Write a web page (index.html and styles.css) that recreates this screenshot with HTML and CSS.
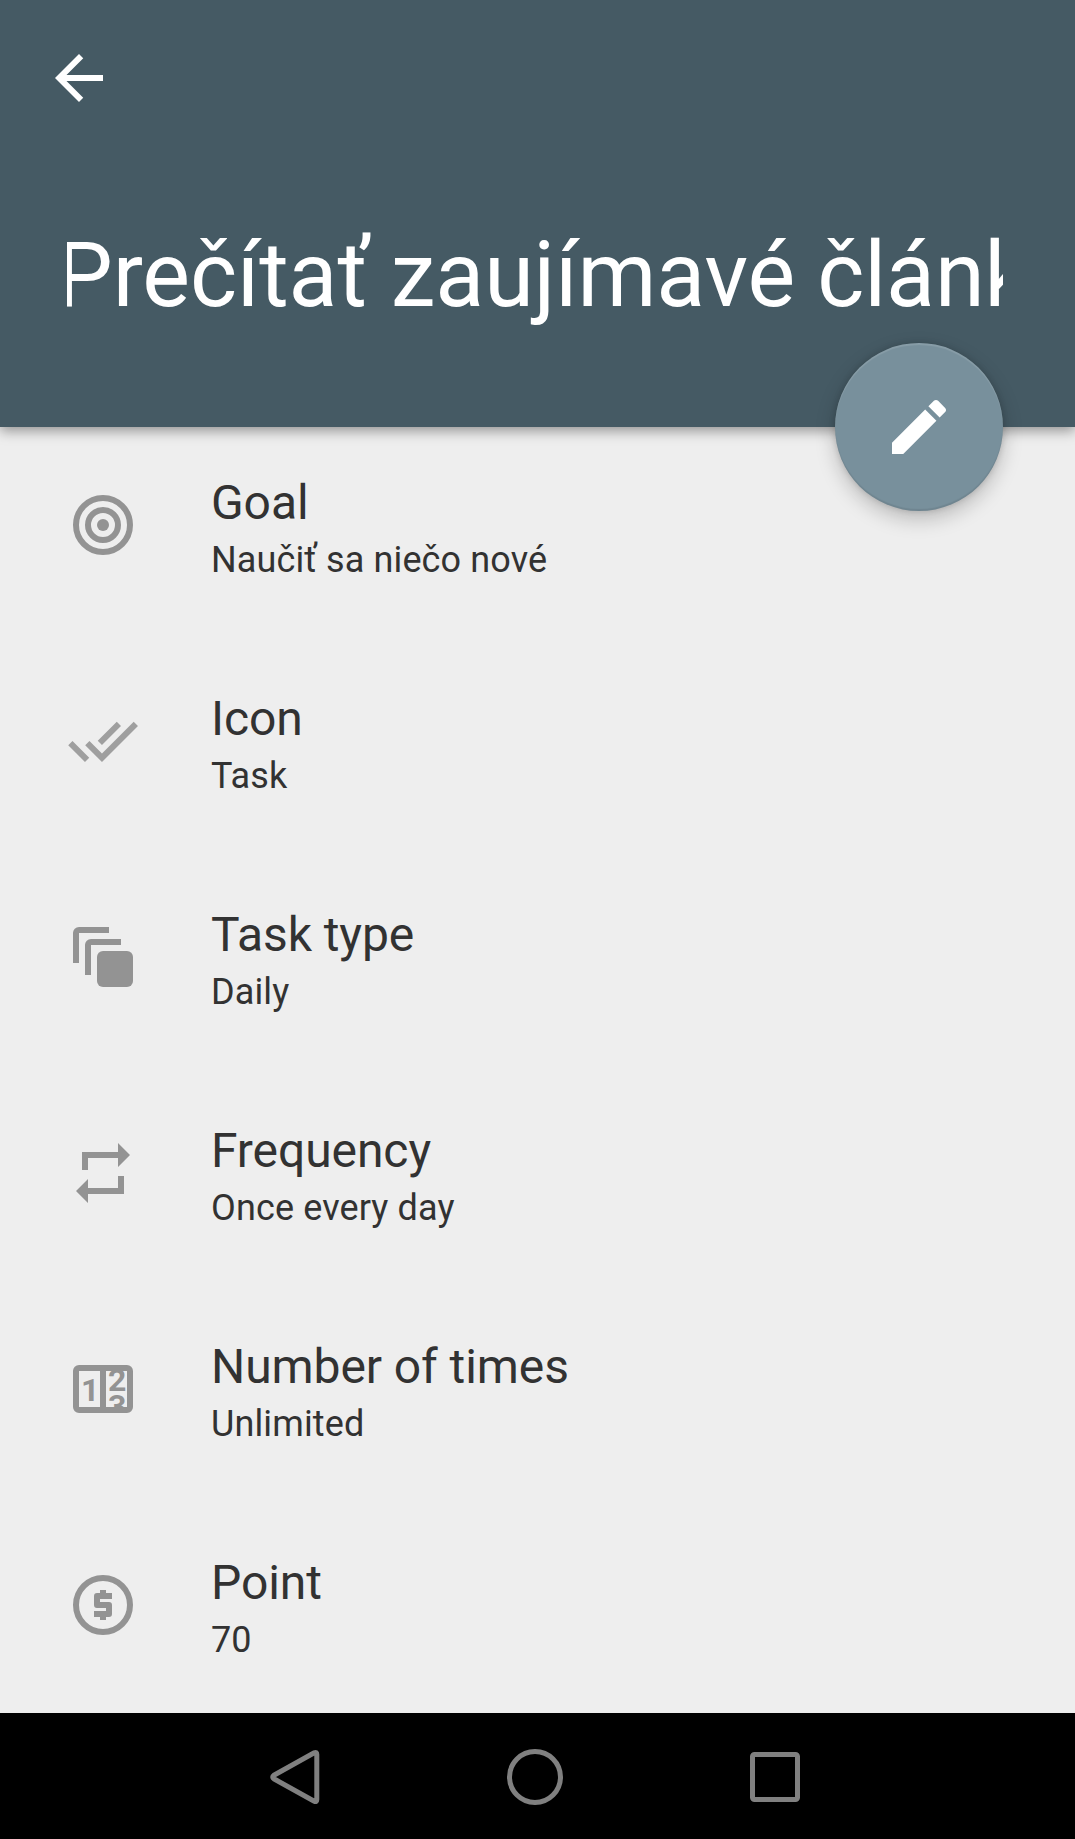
FILE: index.html
```
<!DOCTYPE html>
<html lang="sk">
<head>
    <meta charset="UTF-8">
    <meta name="viewport" content="width=device-width, initial-scale=1.0">
    <title>Task detail</title>
    <link rel="stylesheet" href="styles.css">
</head>
<body>
    <div class="screen">
        <header class="header">
            <a class="back" href="#" aria-label="Back">
                <svg class="icon" viewBox="0 0 24 24"><path d="M20 11H7.83l5.59-5.59L12 4l-8 8 8 8 1.41-1.41L7.83 13H20v-2z"/></svg>
            </a>
            <h1 class="title"><span>Prečítať zaujímavé článk</span></h1>
            <button class="fab" aria-label="Edit">
                <svg class="icon" viewBox="0 0 24 24"><path d="M3 17.25V21h3.75L17.81 9.94l-3.75-3.75L3 17.25zM20.71 7.04c.39-.39.39-1.02 0-1.41l-2.34-2.34c-.39-.39-1.02-.39-1.41 0l-1.83 1.83 3.75 3.75 1.83-1.83z"/></svg>
            </button>
        </header>

        <ul class="list">
            <li class="row">
                <svg class="icon" viewBox="0 0 24 24">
                    <g fill="none" stroke="currentColor" stroke-width="2"><circle cx="12" cy="12" r="9"/><circle cx="12" cy="12" r="5"/></g>
                    <circle cx="12" cy="12" r="2"/>
                </svg>
                <div class="text">
                    <div class="label">Goal</div>
                    <div class="value">Naučiť sa niečo nové</div>
                </div>
            </li>
            <li class="row">
                <svg class="icon light" viewBox="0 0 24 24"><path d="M18 7l-1.41-1.41-6.34 6.34 1.41 1.41L18 7zm4.24-1.41L11.66 16.17 7.48 12l-1.41 1.41L11.66 19l12-12-1.42-1.41zM.41 13.41L6 19l1.41-1.41L1.83 12 .41 13.41z"/></svg>
                <div class="text">
                    <div class="label">Icon</div>
                    <div class="value">Task</div>
                </div>
            </li>
            <li class="row">
                <svg class="icon" viewBox="0 0 24 24">
                    <path d="M2 14V4a2 2 0 0 1 2-2h10v2H4v10zM6 18V8a2 2 0 0 1 2-2h10v2H8v10z"/>
                    <rect x="10" y="10" width="12" height="12" rx="2"/>
                </svg>
                <div class="text">
                    <div class="label">Task type</div>
                    <div class="value">Daily</div>
                </div>
            </li>
            <li class="row">
                <svg class="icon" viewBox="0 0 24 24"><path d="M17 17H7v-3l-4 4 4 4v-3h12v-6h-2zM7 7h10v3l4-4-4-4v3H5v6h2z"/></svg>
                <div class="text">
                    <div class="label">Frequency</div>
                    <div class="value">Once every day</div>
                </div>
            </li>
            <li class="row">
                <!-- counter with a half-turned second digit -->
                <svg class="icon" viewBox="0 0 72 72">
                    <clipPath id="window"><rect x="39" y="18" width="21" height="36"/></clipPath>
                    <rect x="9" y="15" width="54" height="42" rx="3" fill="none" stroke="currentColor" stroke-width="6"/>
                    <rect x="33" y="15" width="6" height="42"/>
                    <text class="digit" x="14" y="48">1</text>
                    <g clip-path="url(#window)">
                        <text class="digit" x="41" y="38">2</text>
                        <text class="digit" x="41" y="64">3</text>
                    </g>
                </svg>
                <div class="text">
                    <div class="label">Number of times</div>
                    <div class="value">Unlimited</div>
                </div>
            </li>
            <li class="row">
                <svg class="icon" viewBox="0 0 24 24">
                    <circle cx="12" cy="12" r="9" fill="none" stroke="currentColor" stroke-width="2"/>
                    <path d="M11 17v-1H9v-2h4v-1h-3a1 1 0 0 1-1-1V9a1 1 0 0 1 1-1h1V7h2v1h2v2h-4v1h3a1 1 0 0 1 1 1v3a1 1 0 0 1-1 1h-1v1z"/>
                </svg>
                <div class="text">
                    <div class="label">Point</div>
                    <div class="value">70</div>
                </div>
            </li>
        </ul>

        <nav class="navbar">
            <svg class="nav-icon" viewBox="0 0 60 60"><path d="M8.9 28.2 49.2 5.8Q51.8 4.6 51.8 7.5v45Q51.8 55.4 49.2 54.2L8.9 31.8Q6.5 30 8.9 28.2z"/></svg>
            <svg class="nav-icon" viewBox="0 0 60 60"><circle cx="30" cy="30" r="25.5"/></svg>
            <svg class="nav-icon" viewBox="0 0 60 60"><rect x="7.5" y="7.5" width="45" height="45" rx="2"/></svg>
        </nav>
    </div>
</body>
</html>
```
FILE: styles.css
```
* {
    box-sizing: border-box;
}
body {
    margin: 0;
    font-family: Roboto, sans-serif;
    background-color: #eee;
    color: #323232;
}
.screen {
    display: flex;
    flex-direction: column;
    height: 1839px;
    overflow: hidden;
}
.header {
    position: relative;
    flex: none;
    height: 427px;
    padding: 42px 72px 0 67px;
    background-color: #455a64;
    color: #fff;
    box-shadow: 0 4px 12px rgba(0, 0, 0, 0.38);
}
.icon {
    display: block;
    flex: none;
    width: 72px;
    height: 72px;
    fill: currentColor;
}
.back {
    display: block;
    width: 72px;
    margin-left: -24px;
    color: #fff;
}
.title {
    margin: 109px 0 0;
    overflow: hidden;
    white-space: nowrap;
    font-size: 90px;
    font-weight: 400;
    line-height: 106px;
    letter-spacing: -0.08px;
}
.title span {
    display: block;
    margin-left: -11px;
}
/* floats over the bottom edge of the header */
.fab {
    position: absolute;
    right: 72px;
    bottom: -84px;
    display: flex;
    align-items: center;
    justify-content: center;
    width: 168px;
    height: 168px;
    padding: 0;
    border: none;
    border-radius: 50%;
    background-color: #78909c;
    color: #fff;
    box-shadow: 0 8px 20px rgba(0, 0, 0, 0.22), 0 0 6px rgba(0, 0, 0, 0.14), inset 0 2px 1px rgba(255, 255, 255, 0.12), inset 0 -2px 1px rgba(0, 0, 0, 0.08);
}
.list {
    flex: 1;
    min-height: 0;
    margin: 0;
    padding: 0 67px;
    list-style: none;
}
.row {
    display: flex;
    gap: 72px;
    height: 216px;
    padding-top: 48px;
}
.row .icon {
    margin-top: 14px;
    color: #939393;
}
.row .light {
    color: #9f9f9f;
}
.digit {
    font-size: 32px;
    font-weight: 700;
}
.label {
    font-size: 48px;
    line-height: 56px;
    letter-spacing: -0.08px;
}
.value {
    margin-top: 8px;
    font-size: 36px;
    line-height: 42px;
    letter-spacing: 0.13px;
}
.navbar {
    display: flex;
    flex: none;
    justify-content: center;
    gap: 180px;
    height: 126px;
    padding: 34px 5px 0 0;
    background-color: #000;
}
.nav-icon {
    width: 60px;
    height: 60px;
    fill: none;
    stroke: #808080;
    stroke-width: 5;
}
```
